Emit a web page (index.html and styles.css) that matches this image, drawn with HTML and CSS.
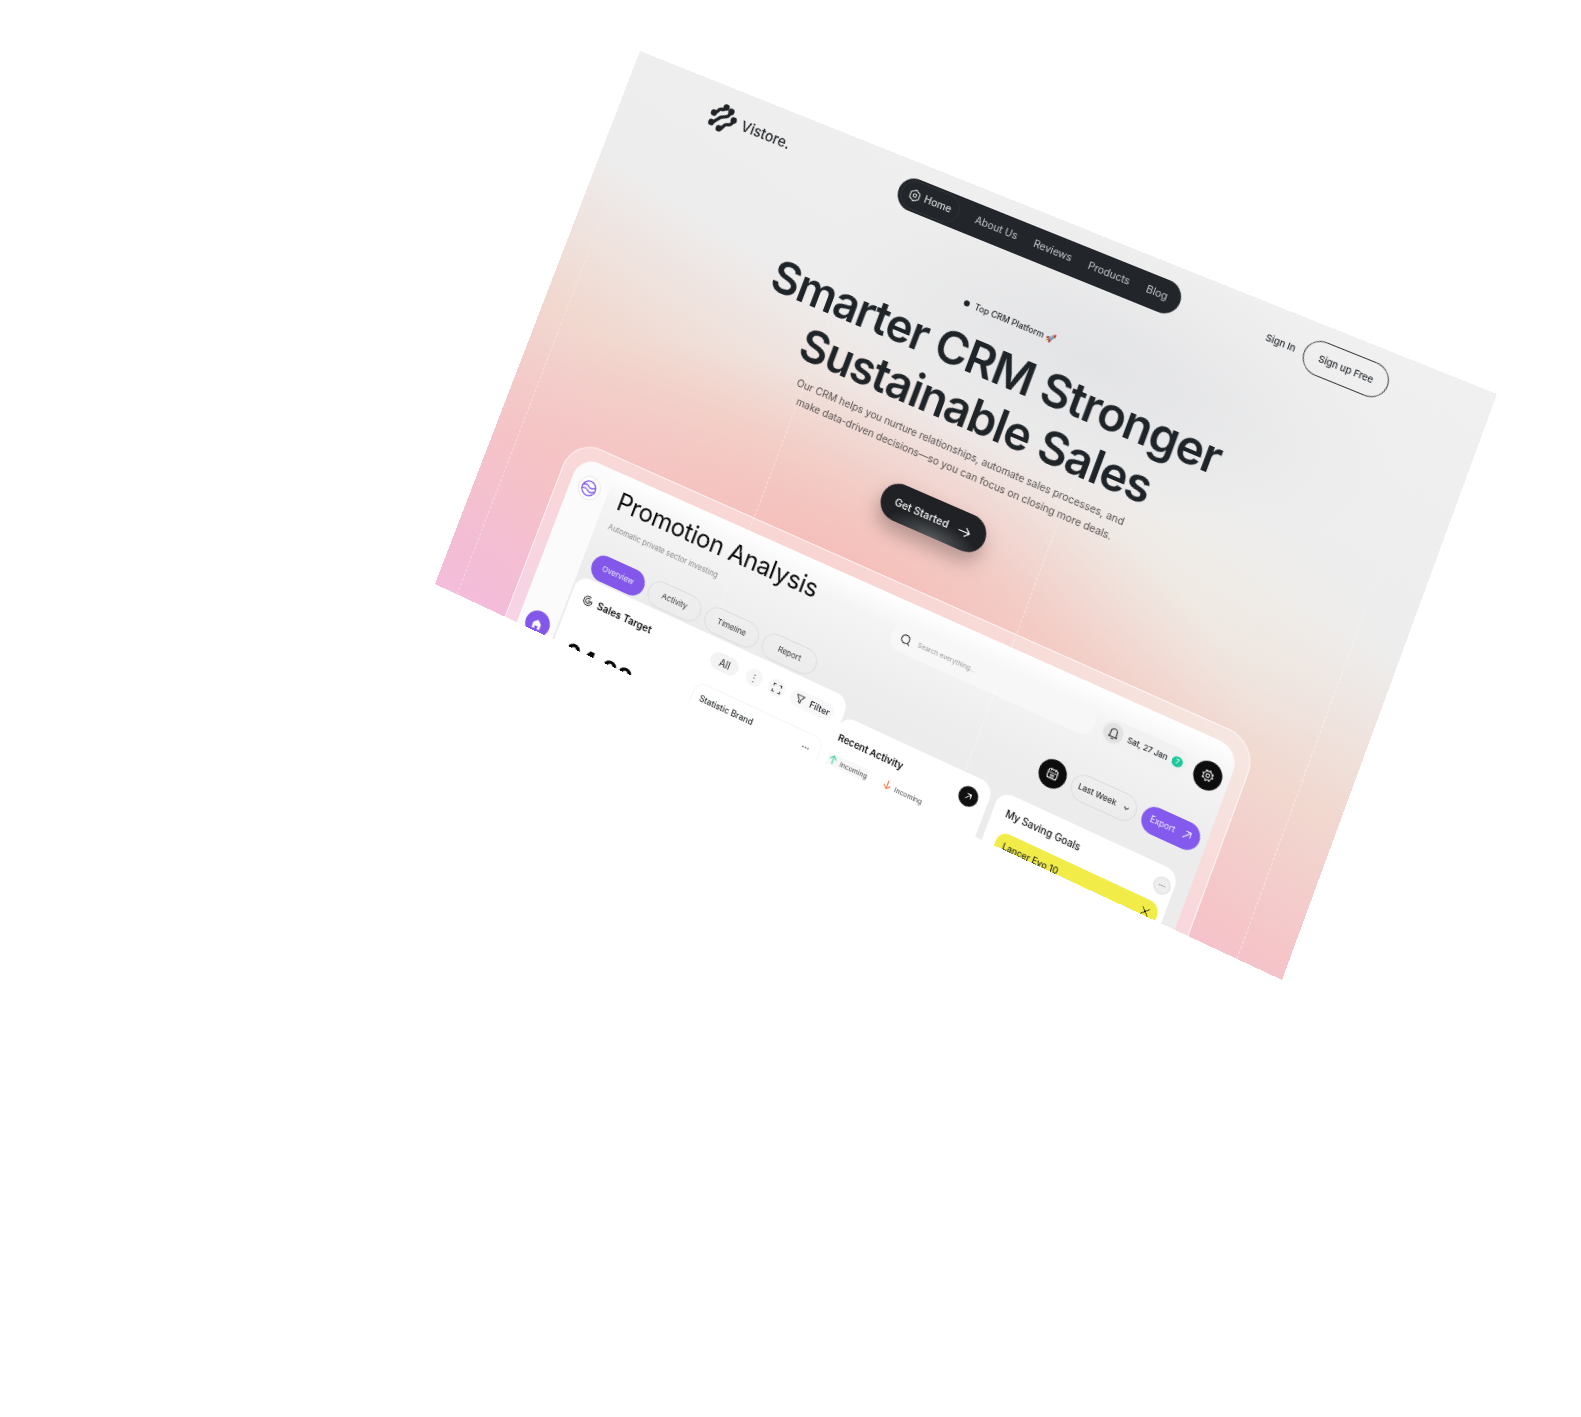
FILE: index.html
```html
<!DOCTYPE html>
<html lang="en">
<head>
  <meta charset="UTF-8" />
  <meta name="viewport" content="width=device-width, initial-scale=1.0" />
  <title>Vistore</title>
  <link rel="stylesheet" href="styles.css">
</head>
<body>
  <section class="page">
    <div class="guides"><span></span><span></span><span></span><span></span></div>

    <header class="topbar">
      <a class="brand">
        <svg class="brand-mark" viewBox="0 0 32 32" fill="none" stroke="#1f2327" stroke-width="3.800" stroke-linecap="round">
          <path d="M3 14c4 0 4-5 6-6s5 0 6-5" />
          <path d="M4 25c4 0 5-6 9-9s8-1 9-10" />
          <path d="M15 29c4 0 3-5 6-7s6 0 7-8" />
          <g fill="#1f2327" stroke="none">
            <circle cx="3.500" cy="14" r="3.600" /><circle cx="15" cy="3.500" r="3.600" />
            <circle cx="4.500" cy="25" r="3.600" /><circle cx="22" cy="6" r="3.600" />
            <circle cx="15" cy="28.500" r="3.600" /><circle cx="28" cy="14" r="3.600" />
          </g>
        </svg>
        <span>Vistore.</span>
      </a>
      <nav class="nav">
        <a class="nav-home">
          <svg viewBox="0 0 16 16" fill="none" stroke="#e8e8e8" stroke-width="1.2"><path d="M8 1.500l5.500 3.200v6.600L8 14.500l-5.500-3.200V4.700z" stroke-linejoin="round" /><circle cx="8" cy="8" r="2" /></svg>
          Home
        </a>
        <a>About Us</a>
        <a>Reviews</a>
        <a>Products</a>
        <a>Blog</a>
      </nav>
      <div class="auth">
        <a>Sign In</a>
        <a class="signup">Sign up Free</a>
      </div>
    </header>

    <div class="hero">
      <div class="tag"><i></i>Top CRM Platform 🚀</div>
      <h1>Smarter CRM Stronger<br>Sustainable Sales</h1>
      <p>Our CRM helps you nurture relationships, automate sales processes, and<br>make data-driven decisions—so you can focus on closing more deals.</p>
      <a class="cta">Get Started
        <svg viewBox="0 0 16 16" fill="none" stroke="#fff" stroke-width="1.2" stroke-linecap="round" stroke-linejoin="round"><path d="M2 8h12M9.500 3.500L14 8l-4.500 4.500" /></svg>
      </a>
    </div>

    <div class="frame">
      <div class="app">
        <aside class="side">
          <span class="side-logo">
            <svg viewBox="0 0 20 20" fill="none" stroke="#7f56e8" stroke-width="1.500"><circle cx="10" cy="10" r="8.400" /><path d="M2.500 8c2.500-2.500 4.500-2 7 0s4.500 2 8-1M2 12.500c3-2.500 5-2 7.500 0s5 2 8-1" /></svg>
          </span>
          <span class="side-home">
            <svg viewBox="0 0 16 16" fill="#fff"><path d="M8 2.500l5 4.300V13.500H9.800V10H6.200v3.500H3V6.800z" /></svg>
          </span>
        </aside>

        <div class="main">
          <div class="app-head">
            <div>
              <h2>Promotion Analysis</h2>
              <div class="sub">Automatic private sector investing</div>
            </div>
            <div class="tools">
              <div class="search">
                <svg viewBox="0 0 16 16" fill="none" stroke="#222" stroke-width="1.300" stroke-linecap="round"><circle cx="7.500" cy="7.500" r="5.500" /><path d="M11.500 11.500l2.500 2.500" /></svg>
                Search everything...
              </div>
              <div class="date">
                <span class="bell">
                  <svg viewBox="0 0 16 16" fill="none" stroke="#222" stroke-width="1.200"><path d="M8 2c-2.700 0-4 2-4 4.500V10l-1 2h10l-1-2V6.500C12 4 10.700 2 8 2zM6.500 14h3" /></svg>
                </span>
                Sat, 27 Jan
                <b>7</b>
              </div>
              <span class="round">
                <svg viewBox="0 0 16 16" fill="none" stroke="#fff"><circle cx="8" cy="8" r="2" stroke-width="1" /><circle cx="8" cy="8" r="4.900" stroke-width="1" /><circle cx="8" cy="8" r="5.800" stroke-width="1.400" stroke-dasharray="2 2.550" /></svg>
              </span>
            </div>
          </div>

          <div class="bar">
            <div class="tabs">
              <a class="tab tab-on">Overview</a>
              <a class="tab">Activity</a>
              <a class="tab">Timeline</a>
              <a class="tab">Report</a>
            </div>
            <div class="actions">
              <span class="round">
                <svg viewBox="0 0 16 16" fill="none" stroke="#fff" stroke-width="1.100"><rect x="2.500" y="3.500" width="11" height="10" rx="2.500" /><path d="M5.500 2v3M10.500 2v3M3 7h10M5.500 9.500h5M5.500 11.500h5" /></svg>
              </span>
              <a class="tab week">Last Week
                <svg viewBox="0 0 8 8" fill="none" stroke="#333" stroke-width="1"><path d="M1.500 3l2.500 2.500L6.500 3" /></svg>
              </a>
              <a class="export">Export
                <svg viewBox="0 0 12 12" fill="none" stroke="#fff" stroke-width="1"><path d="M2 10l8-8M4 2h6v6" /></svg>
              </a>
            </div>
          </div>

          <div class="cards">
            <div class="card sales">
              <div class="sales-top">
                <div class="card-title">
                  <svg viewBox="0 0 14 14" fill="none" stroke="#222" stroke-width="1.100" stroke-linecap="round"><path d="M12.500 7A5.500 5.500 0 1 1 9.500 2.100M10 7A3 3 0 1 1 8.500 4.400M7 7h5" /></svg>
                  Sales Target
                </div>
                <div class="sales-tools">
                  <span class="chip">All</span>
                  <span class="dot-btn">⋮</span>
                  <span class="dot-btn">
                    <svg viewBox="0 0 12 12" fill="none" stroke="#222" stroke-width="1"><path d="M1.500 4V1.500H4M8 1.500h2.500V4M10.500 8v2.500H8M4 10.500H1.500V8" /></svg>
                  </span>
                  <span class="filter">
                    <svg viewBox="0 0 12 12" fill="none" stroke="#222" stroke-width="0.900" stroke-linejoin="round"><path d="M1.500 2h9L7.200 6.200V10L4.800 9V6.200z" /></svg>
                    Filter
                  </span>
                </div>
              </div>
              <div class="sales-body">
                <div class="amount">24,88</div>
                <div class="brand-stat">
                  <span>Statistic Brand</span>
                  <span class="more">···</span>
                </div>
              </div>
            </div>

            <div class="card recent">
              <div class="recent-top">
                <div class="card-title">Recent Activity</div>
                <span class="go">
                  <svg viewBox="0 0 10 10" fill="none" stroke="#fff" stroke-width="1"><path d="M2.500 7.500l5-5M3.500 2.500h4v4" /></svg>
                </span>
              </div>
              <div class="flows">
                <span class="flow flow-first"><em class="up">↑</em>Incoming</span>
                <span class="flow"><em class="down">↓</em>Incoming</span>
              </div>
            </div>

            <div class="card goals">
              <div class="goals-top">
                <div class="card-title">My Saving Goals</div>
                <span class="more-btn">···</span>
              </div>
              <div class="goal">
                <span>Lancer Evo 10</span>
                <svg viewBox="0 0 10 10" fill="none" stroke="#111" stroke-width="1"><path d="M1.500 1.500l7 7M8.500 1.500l-7 7" /></svg>
              </div>
            </div>
          </div>
        </div>
      </div>
    </div>
  </section>
</body>
</html>
```

FILE: styles.css
```css
* {
  box-sizing: border-box;
}
html, body {
  margin: 0;
  height: 1417px;
  background: #fff;
  overflow: hidden;
}
body {
  font-family: Inter, 'Liberation Sans', sans-serif;
  color: #1f2327;
}
svg {
  display: block;
}

/* the whole shot is one page lying on a free canvas, in perspective */
.page {
  position: absolute;
  top: 0;
  left: 0;
  width: 930px;
  height: 600px;
  overflow: hidden;
  transform-origin: 0 0;
  transform: matrix3d(0.78628, 0.33323, 0, -0.00009033, -0.34857, 0.87907, 0, -0.00001587, 0, 0, 1, 0, 640, 51, 0, 1);
  background:
    radial-gradient(ellipse 430px 170px at 42% 68%, rgba(246, 186, 182, 0.8), rgba(246, 186, 182, 0)),
    radial-gradient(ellipse 220px 110px at 78% 50%, rgba(240, 236, 228, 0.7), rgba(240, 236, 228, 0)),
    radial-gradient(ellipse 300px 130px at 60% 20%, rgba(222, 223, 226, 0.7), rgba(222, 223, 226, 0)),
    linear-gradient(190deg, #f0f0f0 0, #ededed 36%, #f1d8cf 58%, #f5c5c8 76%, #f3bdd4 93%, #f3bddc 100%);
}
.guides {
  position: absolute;
  top: 0;
  bottom: 0;
  left: 26px;
  display: grid;
  grid-template-columns: 265px 289px 304px 1px;
  -webkit-mask-image: linear-gradient(rgba(0, 0, 0, 0.2) 20%, #000 60%);
  mask-image: linear-gradient(rgba(0, 0, 0, 0.2) 20%, #000 60%);
}
.guides span {
  border-left: 1px dashed rgba(255, 255, 255, 0.45);
}

.topbar {
  position: relative;
  display: grid;
  grid-template-columns: 1fr auto 1fr;
  align-items: center;
  height: 34px;
  margin-top: 15px;
  padding: 0 98px 0 96px;
}
.brand {
  display: flex;
  align-items: center;
  gap: 6px;
  font-size: 15px;
  font-weight: 500;
}
.brand-mark {
  width: 30px;
  height: 30px;
}
.nav {
  display: flex;
  align-items: center;
  gap: 18px;
  height: 34px;
  padding: 0 14px 0 3px;
  border-radius: 17px;
  background: #22262a;
  color: #c6c9cb;
  font-size: 10.500px;
}
.nav-home {
  display: flex;
  align-items: center;
  gap: 4px;
  height: 30px;
  padding: 0 8px 0 7px;
  border: 1px solid #2e3237;
  border-radius: 15px;
  color: #f2f2f2;
}
.nav-home svg {
  width: 14px;
  height: 14px;
}
.auth {
  display: flex;
  align-items: center;
  justify-content: flex-end;
  gap: 9px;
  font-size: 9.300px;
  font-weight: 500;
}
.signup {
  padding: 11px 14px;
  border: 1px solid #3a3d40;
  border-radius: 18px;
}

.hero {
  position: relative;
  display: flex;
  flex-direction: column;
  align-items: center;
}
.tag {
  display: flex;
  align-items: center;
  gap: 6px;
  margin-top: 59px;
  font-size: 8.700px;
  font-weight: 500;
  line-height: 14px;
}
.tag i {
  width: 6px;
  height: 6px;
  border-radius: 50%;
  background: #1f2327;
}
h1 {
  margin: 13px 4px 0 0;
  font-size: 46.800px;
  font-weight: 600;
  line-height: 54px;
  letter-spacing: -0.025em;
  text-align: center;
  color: #1f2428;
}
.hero p {
  margin: 5px 6px 0 0;
  font-size: 10.400px;
  line-height: 17.500px;
  text-align: center;
  color: #55504f;
}
.cta {
  display: flex;
  align-items: center;
  gap: 10px;
  height: 38px;
  margin: 26px 5px 0 0;
  padding: 0 15px;
  border-radius: 19px;
  background: radial-gradient(ellipse 50px 18px at 55% 100%, #55585a, #1f2124);
  box-shadow: 0 10px 18px rgba(70, 50, 50, 0.35);
  color: #f5f5f5;
  font-size: 10.800px;
  font-weight: 500;
}
.cta svg {
  width: 15px;
  height: 15px;
}

.frame {
  height: 240px;
  width: 752px;
  margin: 54px 0 0 83px;
  padding: 13px 13px 0;
  border: 1px solid rgba(255, 255, 255, 0.7);
  border-bottom: 0;
  border-radius: 32px 32px 0 0;
  background: rgba(255, 255, 255, 0.35);
}
.app {
  display: flex;
  height: 100%;
  border-radius: 22px 22px 0 0;
  overflow: hidden;
  background: linear-gradient(180deg, #fff 0, #f4f4f4 30px, #ececec 110px);
}
.side {
  flex: none;
  display: flex;
  flex-direction: column;
  align-items: center;
  width: 42px;
  padding-top: 15px;
  background: #fbfbfb;
}
.side-logo {
  display: flex;
  align-items: center;
  justify-content: center;
  width: 25px;
  height: 25px;
  border: 1px solid #e6e6e6;
  border-radius: 50%;
  background: #fff;
}
.side-logo svg {
  width: 18px;
  height: 18px;
}
.side-home {
  display: flex;
  align-items: center;
  justify-content: center;
  width: 27px;
  height: 27px;
  margin-top: 124px;
  border-radius: 50%;
  background: #8257ea;
}
.side-home svg {
  width: 14px;
  height: 14px;
}
.main {
  flex: 1;
  padding: 13px 7px 0 2px;
  min-width: 0;
}
.app-head {
  display: flex;
  justify-content: space-between;
  align-items: flex-start;
  height: 48px;
  padding-left: 11px;
}
h2 {
  margin: 0;
  font-size: 25.500px;
  font-weight: 400;
  line-height: 28px;
  letter-spacing: -0.01em;
  color: #0c0c0c;
}
.sub {
  margin-top: 9px;
  font-size: 7.800px;
  line-height: 10px;
  color: #8a8a8a;
}
.tools {
  display: flex;
  align-items: center;
  margin-top: 9px;
  gap: 8px;
}
.search {
  display: flex;
  align-items: center;
  gap: 7px;
  width: 217px;
  height: 28px;
  padding-left: 9px;
  border-radius: 10px;
  background: #f7f7f7;
  font-size: 6.600px;
  color: #9a9a9a;
}
.search svg {
  width: 12px;
  height: 12px;
}
.date {
  display: flex;
  align-items: center;
  gap: 5px;
  width: 88px;
  height: 26px;
  padding: 0 4px 0 2px;
  border-radius: 13px;
  background: #f1f1f1;
  font-size: 7.800px;
  font-weight: 500;
  white-space: nowrap;
}
.bell {
  display: flex;
  align-items: center;
  justify-content: center;
  flex: none;
  width: 20px;
  height: 20px;
  border-radius: 50%;
  background: #e2e2e2;
}
.bell svg {
  width: 13px;
  height: 13px;
}
.date b {
  width: 14px;
  height: 10px;
  border-radius: 5px;
  background: #1dc79a;
  color: #e6fff6;
  font-size: 6.500px;
  font-weight: 500;
  line-height: 10px;
  text-align: center;
}
.round {
  display: flex;
  align-items: center;
  justify-content: center;
  flex: none;
  width: 28px;
  height: 28px;
  border-radius: 50%;
  background: #0d0d0d;
}
.round svg {
  width: 14px;
  height: 14px;
}

.bar {
  position: relative;
  z-index: 2;
  display: flex;
  justify-content: space-between;
  align-items: center;
  height: 28px;
  margin-top: 22px;
  padding-left: 9px;
}
.tabs, .actions {
  display: flex;
  align-items: center;
  gap: 5px;
}
.tab {
  display: flex;
  align-items: center;
  justify-content: center;
  gap: 7px;
  width: 60px;
  height: 27px;
  border: 1px solid #dcdcdc;
  border-radius: 14px;
  font-size: 8px;
  color: #333;
}
.tab-on {
  border: 0;
  background: #8257ea;
  color: #f1ecff;
}
.actions {
  gap: 6px;
}
.week {
  width: 68px;
  font-weight: 500;
}
.week svg {
  width: 7px;
  height: 7px;
}
.export {
  display: flex;
  align-items: center;
  justify-content: center;
  gap: 7px;
  width: 59px;
  height: 27px;
  border-radius: 14px;
  background: #8459ee;
  font-size: 8.300px;
  color: #eee8ff;
}
.export svg {
  width: 10px;
  height: 10px;
}

.cards {
  display: flex;
  align-items: flex-start;
}
.card {
  border-radius: 14px;
  background: #fff;
  height: 120px;
}
.card-title {
  display: flex;
  align-items: center;
  gap: 5px;
  font-size: 10.400px;
  font-weight: 600;
  color: #111;
}
.card-title svg {
  width: 12px;
  height: 12px;
}
.sales {
  position: relative;
  z-index: 1;
  flex: none;
  width: 307px;
  margin-top: 2px;
  padding: 11px 9px 0 13px;
}
.sales-top {
  display: flex;
  justify-content: space-between;
  align-items: center;
  height: 20px;
}
.sales-tools {
  display: flex;
  align-items: center;
  gap: 7px;
}
.chip {
  width: 31px;
  height: 18px;
  margin-right: 2px;
  border-radius: 9px;
  background: #f3f3f3;
  font-size: 10px;
  line-height: 18px;
  text-align: center;
}
.dot-btn {
  display: flex;
  align-items: center;
  justify-content: center;
  width: 18px;
  height: 18px;
  border-radius: 50%;
  background: #f6f6f6;
  font-size: 10px;
}
.dot-btn svg {
  width: 11px;
  height: 11px;
}
.filter {
  display: flex;
  align-items: center;
  gap: 5px;
  padding: 3px 5px;
  border-radius: 9px;
  background: #f8f8f8;
  font-size: 9px;
  font-weight: 500;
}
.filter svg {
  width: 11px;
  height: 11px;
}
.sales-body {
  display: flex;
  justify-content: space-between;
  align-items: flex-start;
}
.amount {
  margin: 29px 0 0 2px;
  font-size: 26.500px;
  font-weight: 700;
  line-height: 34px;
  color: #050505;
}
.brand-stat {
  display: flex;
  justify-content: space-between;
  width: 143px;
  height: 40px;
  margin-top: 17px;
  padding: 9px 10px 9px 8px;
  border: 1px solid #f5f5f5;
  border-radius: 10px;
  font-size: 8.600px;
  font-weight: 500;
}
.more {
  font-weight: 700;
}
.recent {
  flex: none;
  width: 165px;
  margin: 20px 0 0 -1px;
  padding: 11px 10px 0 4px;
}
.recent .card-title {
  font-size: 9.600px;
}
.recent-top {
  display: flex;
  justify-content: space-between;
  align-items: center;
  height: 20px;
}
.go {
  display: flex;
  align-items: center;
  justify-content: center;
  width: 20px;
  height: 20px;
  border-radius: 50%;
  background: #111;
}
.go svg {
  width: 10px;
  height: 10px;
}
.flows {
  display: flex;
  gap: 17px;
  margin-top: 8px;
  font-size: 6.800px;
  color: #444;
}
.flow {
  display: flex;
  align-items: center;
  gap: 3px;
}
.flow-first {
  background: #f7f7f7;
  margin-left: -6px;
  padding-left: 4px;
}
.flow em {
  font-size: 12px;
  font-style: normal;
  line-height: 12px;
}
.up {
  color: #2fd0a0;
}
.down {
  color: #ee6a3c;
}
.goals {
  flex: none;
  width: 188px;
  margin: 22px 0 0 7px;
  padding: 8px 3px 0 13px;
}
.goals-top {
  display: flex;
  justify-content: space-between;
  align-items: center;
  height: 20px;
}
.goals .card-title {
  font-size: 9.800px;
  font-weight: 500;
}
.more-btn {
  width: 17px;
  height: 17px;
  border: 1px solid #ddd;
  border-radius: 50%;
  background: #eee;
  font-size: 8px;
  line-height: 14px;
  text-align: center;
}
.goal {
  display: flex;
  justify-content: space-between;
  align-items: flex-start;
  height: 60px;
  margin: 8px 3px 0 0;
  padding: 7px 7px 0 8px;
  border-radius: 11px;
  background: #f2ec49;
  font-size: 8.800px;
  font-weight: 500;
}
.goal svg {
  width: 10px;
  height: 10px;
}
```
